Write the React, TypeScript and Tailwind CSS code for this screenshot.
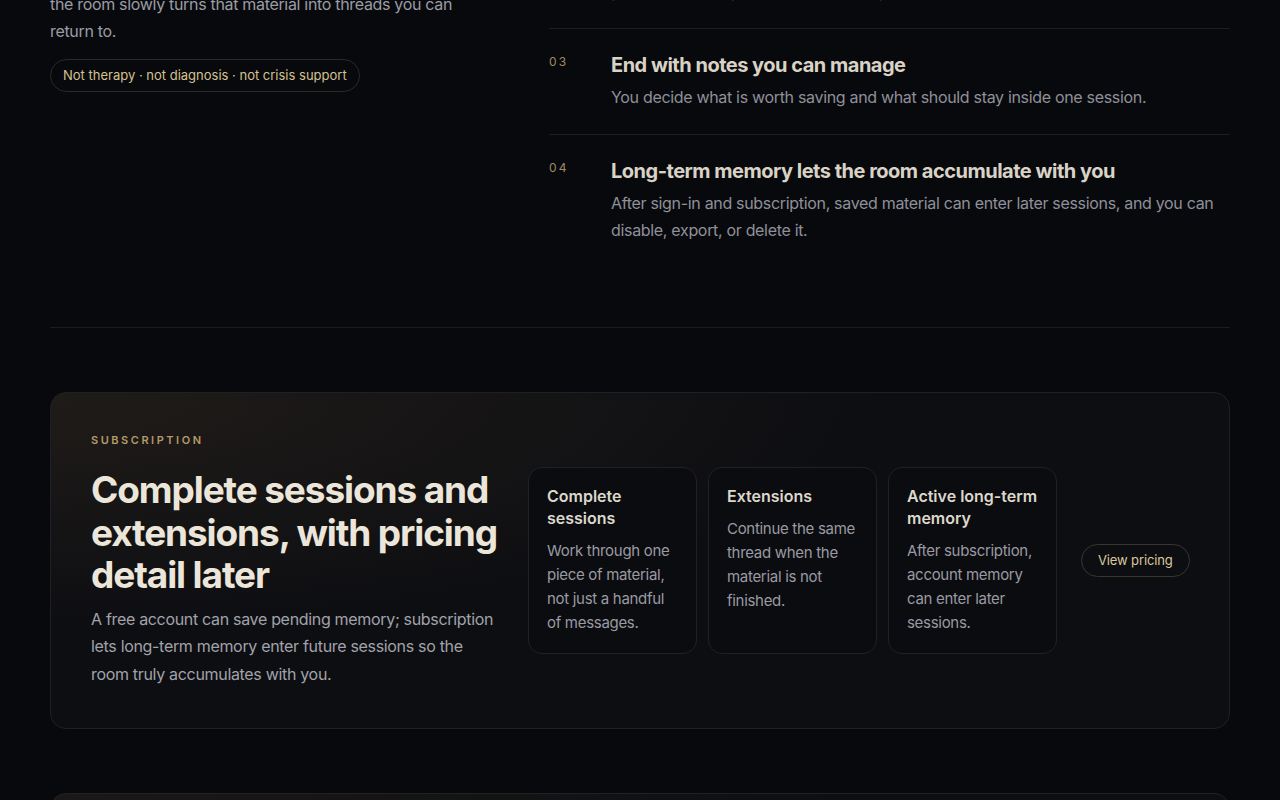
import React from "react";

const steps = [
  {
    n: "01",
    title: "Bring one piece of material",
    body: "A dream, a recurring image, a sentence you cannot shake, or a feeling that keeps returning to the same place.",
  },
  {
    n: "02",
    title: "The room stays with it",
    body: "It asks quiet questions, reflects back the patterns you keep approaching, and gives you space to stay with what is already there.",
  },
  {
    n: "03",
    title: "End with notes you can manage",
    body: "You decide what is worth saving and what should stay inside one session.",
  },
  {
    n: "04",
    title: "Long-term memory lets the room accumulate with you",
    body: "After sign-in and subscription, saved material can enter later sessions, and you can disable, export, or delete it.",
  },
];

const plans = [
  {
    title: "Complete sessions",
    body: "Work through one piece of material, not just a handful of messages.",
  },
  {
    title: "Extensions",
    body: "Continue the same thread when the material is not finished.",
  },
  {
    title: "Active long-term memory",
    body: "After subscription, account memory can enter later sessions.",
  },
];

export default function App() {
  return (
    <div
      className="min-h-screen overflow-hidden bg-[#08090d] text-[#9b9ca4]"
      style={{ fontFamily: "Inter, 'Noto Sans', 'Liberation Sans', sans-serif" }}
    >
      <div className="mx-auto -mt-[237px] w-[1180px]">
        {/* How it works */}
        <section className="grid grid-cols-[451px_681px] gap-[48px] border-b border-[#1b1c21] pb-[60px]">
          <div className="pt-px">
            <div className="text-[11px] font-semibold uppercase leading-4 tracking-[0.23em] text-[#b39a68]">
              How it works
            </div>
            <h2 className="mt-[18px] whitespace-nowrap text-[37px] font-bold leading-[42px] tracking-[-0.03em] text-[#ece6da]">
              One session,
              <br />
              from material
              <br />
              to threads
            </h2>
            <p className="mt-[40px] text-[16px] leading-[27px] tracking-[-0.02em] text-[#9b9ca4]">
              Start with one dream, image, or feeling. Over time,
              <br />
              the room slowly turns that material into threads you can
              <br />
              return to.
            </p>
            <div className="mt-[14px] inline-flex h-[33px] items-center rounded-full border border-[#2c2a26] px-3 text-[13px] text-[#d6c28f]">
              Not therapy · not diagnosis · not crisis support
            </div>
          </div>

          <ol className="divide-y divide-[#1c1d22]">
            {steps.map((s) => (
              <li key={s.n} className="grid grid-cols-[62px_1fr] pt-[22px] pb-[23px]">
                <span className="pt-[3px] text-[12px] leading-4 tracking-[0.18em] text-[#a08a62]">
                  {s.n}
                </span>
                <div>
                  <h3 className="text-[20px] font-bold leading-[28px] tracking-[-0.025em] text-[#d9d3c6]">
                    {s.title}
                  </h3>
                  <p className="mt-[5px] text-[16px] leading-[27px] tracking-[-0.02em] text-[#8f9099]">{s.body}</p>
                </div>
              </li>
            ))}
          </ol>
        </section>

        {/* Subscription */}
        <section className="py-16">
          <div className="flex items-center rounded-2xl border border-[#1f2025] bg-[#0d0e12] bg-[radial-gradient(ellipse_at_top_left,rgba(130,98,58,0.16),transparent_50%)] p-10">
            <div className="w-[415px] shrink-0">
              <div className="-mt-px text-[11px] font-semibold uppercase leading-4 tracking-[0.23em] text-[#b39a68]">
                Subscription
              </div>
              <h2 className="mt-[21px] text-[37px] font-bold leading-[42.5px] tracking-[-0.03em] text-[#ece6da]">
                Complete sessions and extensions, with pricing detail later
              </h2>
              <p className="mt-[9px] max-w-[404px] text-[16px] leading-[27.5px] tracking-[-0.02em] text-[#a2a2aa]">
                A free account can save pending memory; subscription lets long-term memory enter future sessions so the
                room truly accumulates with you.
              </p>
            </div>

            <div className="ml-[22px] flex shrink-0 gap-[11px]">
              {plans.map((p) => (
                <div
                  key={p.title}
                  className="min-h-[186px] w-[169px] rounded-[14px] border border-[#202127] bg-[#0b0c10] px-[18px] pt-[17px] pb-[18px]"
                >
                  <h3 className="text-[16px] font-semibold leading-[22px] text-[#ddd8cc]">{p.title}</h3>
                  <p className="mt-[10px] text-[15px] leading-[24px] tracking-[-0.02em] text-[#9a9aa2]">{p.body}</p>
                </div>
              ))}
            </div>

            <button className="ml-[24px] h-[33px] shrink-0 whitespace-nowrap rounded-full border border-[#3a362d] px-4 text-[13px] tracking-[-0.01em] text-[#dcc89a]">
              View pricing
            </button>
          </div>
        </section>

        {/* Memory controls */}
        <section>
          <div className="h-[320px] rounded-2xl border border-[#24221f] bg-[#0d0e12] bg-[radial-gradient(ellipse_at_top_left,rgba(130,98,58,0.12),transparent_50%)]" />
        </section>
      </div>
    </div>
  );
}
